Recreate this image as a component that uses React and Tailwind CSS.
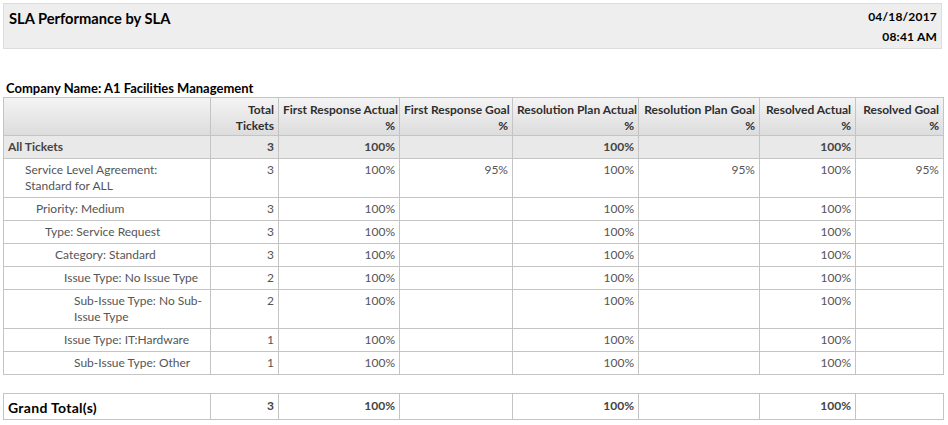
const COLS = ['w-[207px]', 'w-[68px]', 'w-[121px]', 'w-[113px]', 'w-[126px]', 'w-[121px]', 'w-[96px]', 'w-[88px]']

const HEAD = [
  [],
  ['Total', 'Tickets'],
  ['First Response Actual', '%'],
  ['First Response Goal', '%'],
  ['Resolution Plan Actual', '%'],
  ['Resolution Plan Goal', '%'],
  ['Resolved Actual', '%'],
  ['Resolved Goal', '%'],
]

const ROWS = [
  { label: 'Service Level Agreement: Standard for ALL', pad: 'pl-[21px]', vals: ['3', '100%', '95%', '100%', '95%', '100%', '95%'] },
  { label: 'Priority: Medium', pad: 'pl-[32px]', vals: ['3', '100%', '', '100%', '', '100%', ''] },
  { label: 'Type: Service Request', pad: 'pl-[41px]', vals: ['3', '100%', '', '100%', '', '100%', ''] },
  { label: 'Category: Standard', pad: 'pl-[51px]', vals: ['3', '100%', '', '100%', '', '100%', ''] },
  { label: 'Issue Type: No Issue Type', pad: 'pl-[60px]', vals: ['2', '100%', '', '100%', '', '100%', ''] },
  { label: 'Sub-Issue Type: No Sub-Issue Type', pad: 'pl-[70px]', vals: ['2', '100%', '', '100%', '', '100%', ''] },
  { label: 'Issue Type: IT:Hardware', pad: 'pl-[60px]', vals: ['1', '100%', '', '100%', '', '100%', ''] },
  { label: 'Sub-Issue Type: Other', pad: 'pl-[70px]', vals: ['1', '100%', '', '100%', '', '100%', ''] },
]

const TOTALS = ['3', '100%', '', '100%', '', '100%', '']

function Cols() {
  return (
    <colgroup>
      {COLS.map((c, i) => <col key={i} className={c} />)}
    </colgroup>
  )
}

export default function App() {
  return (
    <div className="min-h-screen bg-white pt-[3px] pl-[3px] text-[12px] text-[#555] font-['Lato','Open_Sans',sans-serif]">
      {/* report header */}
      <div className="w-[939px] h-[46px] bg-[#eeeeee] border border-[#dddddd] flex justify-between pl-[5px] pr-[4px] pt-[4px]">
        <h1 className="text-[14.7px] font-bold text-black leading-[20px]">SLA Performance by SLA</h1>
        <div className="text-right text-[12px] font-bold text-black leading-[20px] tracking-[0.2px] -mt-[1px]">
          <div>04/18/2017</div>
          <div>08:41 AM</div>
        </div>
      </div>

      <div className="mt-[30px] pl-[3px] text-[13px] font-bold text-black leading-[18px]">Company Name: A1 Facilities Management</div>

      <table className="w-[940px] table-fixed border-collapse">
        <Cols />
        <thead>
          <tr className="bg-gradient-to-b from-[#f4f4f4] to-[#dcdcdc]">
            {HEAD.map((h, i) => (
              <th key={i} className="border border-[#c4c4c4] text-right align-top font-bold text-[#2f2f2f] leading-[16px] px-[4px] pt-[4px] pb-[1px] h-[37px] whitespace-nowrap">
                {h.map((l, j) => <div key={j}>{l}</div>)}
              </th>
            ))}
          </tr>
        </thead>
        <tbody>
          <tr className="bg-[#e9e9e9] font-bold text-[#444]">
            <td className="border border-[#c4c4c4] px-[4px] py-[3px] leading-[16px]">All Tickets</td>
            {TOTALS.map((v, i) => (
              <td key={i} className="border border-[#c4c4c4] text-right px-[4px] py-[3px] leading-[16px]">{v}</td>
            ))}
          </tr>
          {ROWS.map((r, ri) => (
            <tr key={ri}>
              <td className={`border border-[#c4c4c4] pr-[4px] py-[3px] leading-[16px] align-top ${r.pad}`}>{r.label}</td>
              {r.vals.map((v, i) => (
                <td key={i} className="border border-[#c4c4c4] text-right align-top px-[4px] py-[3px] leading-[16px]">{v}</td>
              ))}
            </tr>
          ))}
        </tbody>
      </table>

      <table className="mt-[18px] w-[940px] table-fixed border-collapse">
        <Cols />
        <tbody>
          <tr>
            <td className="border border-[#c4c4c4] px-[4px] h-[26px] text-[14px] font-bold text-black leading-[18px] pt-[3px] tracking-[0.3px]">Grand Total(s)</td>
            {TOTALS.map((v, i) => (
              <td key={i} className="border border-[#c4c4c4] text-right px-[4px] font-bold text-[#444] leading-[16px] pb-[2px]">{v}</td>
            ))}
          </tr>
        </tbody>
      </table>
    </div>
  )
}
